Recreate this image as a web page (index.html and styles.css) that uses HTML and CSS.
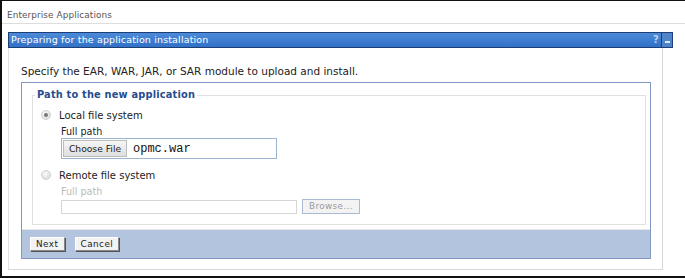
FILE: index.html
```html
<!DOCTYPE html>
<html>
<head>
<meta charset="utf-8">
<link rel="stylesheet" href="styles.css">
</head>
<body>
<div class="frame">
  <div class="crumb">Enterprise Applications</div>
  <div class="panel">
    <div class="titlebar">
      <span class="title">Preparing for the application installation</span>
      <span class="tools">
        <span class="help">?</span>
        <span class="min"><span class="dash"></span></span>
      </span>
    </div>
    <div class="panel-body">
      <p class="intro">Specify the EAR, WAR, JAR, or SAR module to upload and install.</p>
      <div class="box">
        <div class="box-main">
          <div class="fieldset">
            <div class="legend">Path to the new application</div>
            <div class="option">
              <span class="radio checked"></span>
              <span class="opt-label">Local file system</span>
            </div>
            <div class="field">
              <div class="field-label">Full path</div>
              <div class="file">
                <span class="choose">Choose File</span>
                <span class="fname">opmc.war</span>
              </div>
            </div>
            <div class="option">
              <span class="radio"></span>
              <span class="opt-label">Remote file system</span>
            </div>
            <div class="field">
              <div class="field-label disabled">Full path</div>
              <div class="row">
                <span class="text-input"></span>
                <span class="browse">Browse...</span>
              </div>
            </div>
          </div>
        </div>
        <div class="buttons">
          <span class="btn">Next</span>
          <span class="btn">Cancel</span>
        </div>
      </div>
    </div>
  </div>
</div>
</body>
</html>
```
FILE: styles.css
```css
html, body {
  margin: 0;
  padding: 0;
  background: #fff;
}
.frame {
  box-sizing: border-box;
  width: 685px;
  height: 278px;
  border-left: 2px solid #111;
  border-top: 1px solid #111;
  border-bottom: 2px solid #111;
  font-family: "DejaVu Sans", Verdana, sans-serif;
  overflow: hidden;
}
.crumb {
  height: 22px;
  line-height: 29px;
  padding-left: 5px;
  font-size: 8.9px;
  color: #555;
  border-bottom: 1px solid #ddd;
  letter-spacing: 0.1px;
}
.panel {
  margin: 8px 0 0 6px;
  width: 665px;
}
.titlebar {
  box-sizing: border-box;
  height: 16px;
  display: flex;
  align-items: stretch;
  background: linear-gradient(#4c8ad8, #3171c6);
  border: 1px solid #1d3f78;
}
.title {
  flex: 1;
  color: #fff;
  font-size: 9.5px;
  line-height: 14px;
  padding-left: 2px;
  letter-spacing: 0.15px;
}
.tools {
  display: flex;
}
.help {
  width: 10px;
  color: #b9d3f2;
  font-weight: bold;
  font-size: 10px;
  line-height: 14px;
  text-align: center;
  border-right: 1px solid #1d3f78;
}
.min {
  width: 10px;
  display: flex;
  align-items: center;
  justify-content: center;
  background: #4f84c8;
}
.dash {
  width: 5px;
  height: 2px;
  background: #dde8f6;
  margin-top: 4px;
}
.panel-body {
  box-sizing: border-box;
  width: 655px;
  height: 222px;
  border-left: 1px solid #e2e2e2;
  border-right: 1px solid #d8d8d8;
  border-bottom: 1px solid #d8d8d8;
  padding: 16px 0 0 12px;
}
.intro {
  margin: 0;
  font-size: 10.5px;
  line-height: 15px;
  color: #222;
}
.box {
  box-sizing: border-box;
  width: 630px;
  height: 177px;
  margin-top: 3px;
  border: 1px solid #8396c4;
  display: flex;
  flex-direction: column;
}
.box-main {
  flex: 1;
  padding: 12px 4px 0 10px;
  border-bottom: 1px solid #e8e8e8;
}
.fieldset {
  box-sizing: border-box;
  height: 130px;
  border: 1px solid #e0e0e0;
  position: relative;
  padding: 12px 0 0 8px;
}
.legend {
  position: absolute;
  top: -8px;
  left: 2px;
  background: #fff;
  padding: 0 2px;
  font-weight: bold;
  font-size: 9.8px;
  color: #264d8e;
  line-height: 14px;
  letter-spacing: 0.2px;
}
.option {
  display: flex;
  align-items: center;
  height: 14px;
}
.radio {
  box-sizing: border-box;
  width: 10px;
  height: 10px;
  border-radius: 50%;
  border: 1px solid #d0d0d0;
  background: radial-gradient(circle at 40% 35%, #fafafa, #d6d6d6);
  margin-right: 8px;
  display: flex;
  align-items: center;
  justify-content: center;
}
.radio.checked::after {
  content: "";
  width: 4px;
  height: 4px;
  border-radius: 50%;
  background: #777;
}
.opt-label {
  font-size: 10px;
  color: #222;
}
.field {
  padding-left: 20px;
  margin-top: 4px;
  margin-bottom: 9px;
}
.field-label {
  font-size: 9.6px;
  line-height: 12px;
  color: #222;
}
.field-label.disabled {
  color: #bbb;
}
.file {
  box-sizing: border-box;
  width: 216px;
  height: 21px;
  border: 1px solid #9bb3d0;
  display: flex;
  align-items: center;
  padding-left: 1px;
}
.choose {
  box-sizing: border-box;
  height: 17px;
  width: 64px;
  border: 1px solid #bcbcbc;
  background: linear-gradient(#f6f6f6, #dedede);
  font-size: 9.2px;
  line-height: 15px;
  text-align: center;
  color: #222;
}
.fname {
  font-family: "Liberation Mono", "Courier New", monospace;
  font-size: 12px;
  color: #111;
  margin-left: 6px;
}
.row {
  display: flex;
  align-items: center;
  margin-top: 1px;
}
.text-input {
  box-sizing: border-box;
  width: 236px;
  height: 14px;
  border: 1px solid #d6d6d6;
  background: #fff;
}
.browse {
  box-sizing: border-box;
  margin-left: 5px;
  width: 58px;
  height: 15px;
  border: 1px solid #a9bad2;
  background: #f3f3f3;
  font-size: 8.8px;
  line-height: 13px;
  text-align: center;
  color: #999;
  letter-spacing: 0.4px;
}
.buttons {
  height: 28px;
  background: #b3c5de;
  display: flex;
  align-items: center;
  gap: 10px;
  padding-left: 8px;
}
.btn {
  box-sizing: border-box;
  height: 14px;
  padding: 0 5px;
  background: #f2f2f2;
  border: 1px solid #888;
  border-top-color: #fff;
  border-left-color: #fff;
  box-shadow: 1px 1px 0 #555;
  font-size: 8.8px;
  line-height: 12px;
  color: #222;
  letter-spacing: 0.5px;
}
```
